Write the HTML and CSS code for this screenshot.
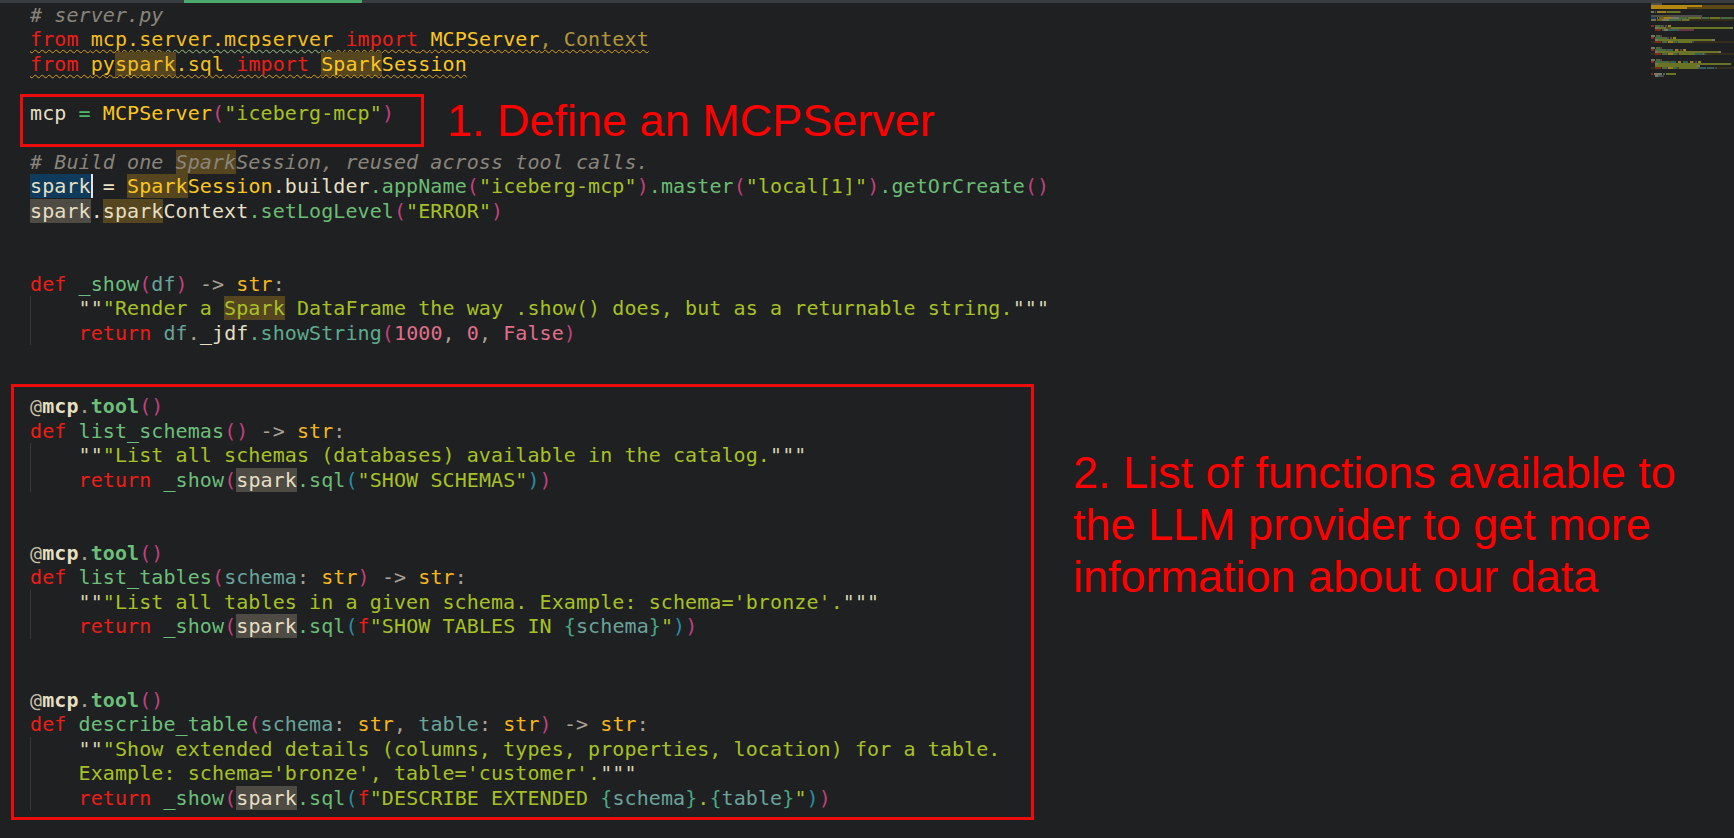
FILE: index.html
```html
<!DOCTYPE html>
<html lang="en">
<head>
<meta charset="utf-8">
<title>server.py</title>
<link rel="stylesheet" href="styles.css">
</head>
<body>
<div class="window">
  <div class="tabbar"><div class="tab-active"></div></div>
  <div class="main">
    <div class="code">
      <div class="ln"><span class="c"># server.py</span></div>
      <div class="ln"><span class="warn"><span class="k">from</span> <span class="m">mcp.se<span class="sq">rver.mcpserver</span></span> <span class="k">import</span> <span class="cl">MCPServer</span><span class="dim">, Context</span></span></div>
      <div class="ln"><span class="warn"><span class="k">from</span> <span class="m">py<span class="hlo">spark</span>.sql</span> <span class="k">import</span> <span class="cl"><span class="hlo">Spark</span>Session</span></span></div>
      <div class="ln"> </div>
      <div class="ln"><span class="v">mcp</span> <span class="op">=</span> <span class="cl">MCPServer</span><span class="p1">(</span><span class="s">"iceberg-mcp"</span><span class="p1">)</span></div>
      <div class="ln"> </div>
      <div class="ln"><span class="c"># Build one <span class="hlo">Spark</span>Session, reused across tool calls.</span></div>
      <div class="ln"><span class="hlb v">spark</span><span class="cursor"></span> <span class="v">=</span> <span class="cl"><span class="hlo">Spark</span>Session</span><span class="v">.builder</span><span class="mt">.appName</span><span class="p1">(</span><span class="s">"iceberg-mcp"</span><span class="p1">)</span><span class="mt">.master</span><span class="p1">(</span><span class="s">"local[1]"</span><span class="p1">)</span><span class="mt">.getOrCreate</span><span class="p1">()</span></div>
      <div class="ln"><span class="hlg v">spark</span><span class="v">.</span><span class="hlo v">spark</span><span class="v">Context</span><span class="mt">.setLogLevel</span><span class="p1">(</span><span class="s">"ERROR"</span><span class="p1">)</span></div>
      <div class="ln"> </div>
      <div class="ln"> </div>
      <div class="ln"><span class="k">def</span> <span class="fn">_show</span><span class="p1">(</span><span class="pa">df</span><span class="p1">)</span> <span class="g">-&gt;</span> <span class="t">str</span><span class="g">:</span></div>
      <div class="guide">
        <div class="ln">    <span class="dq">""</span><span class="s">"Render a <span class="hlo">Spark</span> DataFrame the way .show() does, but as a returnable string.</span><span class="dq">"""</span></div>
        <div class="ln">    <span class="k">return</span> <span class="pa">df</span><span class="g">.</span><span class="v">_jdf</span><span class="mt2">.showString</span><span class="p1">(</span><span class="n">1000</span><span class="g">, </span><span class="n">0</span><span class="g">, </span><span class="n">False</span><span class="p1">)</span></div>
      </div>
      <div class="ln"> </div>
      <div class="ln"> </div>
      <div class="ln"><span class="at">@</span><span class="b v">mcp</span><span class="g">.</span><span class="b fn">tool</span><span class="p1">()</span></div>
      <div class="ln"><span class="k">def</span> <span class="fn">list_schemas</span><span class="p1">()</span> <span class="g">-&gt;</span> <span class="t">str</span><span class="g">:</span></div>
      <div class="guide">
        <div class="ln">    <span class="dq">""</span><span class="s">"List all schemas (databases) available in the catalog.</span><span class="dq">"""</span></div>
        <div class="ln">    <span class="k">return</span> <span class="fn">_show</span><span class="p1">(</span><span class="hlg v">spark</span><span class="mt">.sql</span><span class="p2">(</span><span class="s">"SHOW SCHEMAS"</span><span class="p2">)</span><span class="p1">)</span></div>
      </div>
      <div class="ln"> </div>
      <div class="ln"> </div>
      <div class="ln"><span class="at">@</span><span class="b v">mcp</span><span class="g">.</span><span class="b fn">tool</span><span class="p1">()</span></div>
      <div class="ln"><span class="k">def</span> <span class="fn">list_tables</span><span class="p1">(</span><span class="pa">schema</span><span class="g">: </span><span class="t">str</span><span class="p1">)</span> <span class="g">-&gt;</span> <span class="t">str</span><span class="g">:</span></div>
      <div class="guide">
        <div class="ln">    <span class="dq">""</span><span class="s">"List all tables in a given schema. Example: schema='bronze'.</span><span class="dq">"""</span></div>
        <div class="ln">    <span class="k">return</span> <span class="fn">_show</span><span class="p1">(</span><span class="hlg v">spark</span><span class="mt">.sql</span><span class="p2">(</span><span class="k">f</span><span class="s">"SHOW TABLES IN </span><span class="br">{</span><span class="pa">schema</span><span class="br">}</span><span class="s">"</span><span class="p2">)</span><span class="p1">)</span></div>
      </div>
      <div class="ln"> </div>
      <div class="ln"> </div>
      <div class="ln"><span class="at">@</span><span class="b v">mcp</span><span class="g">.</span><span class="b fn">tool</span><span class="p1">()</span></div>
      <div class="ln"><span class="k">def</span> <span class="fn">describe_table</span><span class="p1">(</span><span class="pa">schema</span><span class="g">: </span><span class="t">str</span><span class="g">, </span><span class="pa">table</span><span class="g">: </span><span class="t">str</span><span class="p1">)</span> <span class="g">-&gt;</span> <span class="t">str</span><span class="g">:</span></div>
      <div class="guide">
        <div class="ln">    <span class="dq">""</span><span class="s">"Show extended details (columns, types, properties, location) for a table.</span></div>
        <div class="ln">    <span class="s">Example: schema='bronze', table='customer'.</span><span class="dq">"""</span></div>
        <div class="ln">    <span class="k">return</span> <span class="fn">_show</span><span class="p1">(</span><span class="hlg v">spark</span><span class="mt">.sql</span><span class="p2">(</span><span class="k">f</span><span class="s">"DESCRIBE EXTENDED </span><span class="br">{</span><span class="pa">schema</span><span class="br">}</span><span class="s">.</span><span class="br">{</span><span class="pa">table</span><span class="br">}</span><span class="s">"</span><span class="p2">)</span><span class="p1">)</span></div>
      </div>
      <div class="ln"> </div>
    </div>
    <div class="minimap">
      <svg width="83" height="80" viewBox="0 0 83 80" shape-rendering="crispEdges" aria-hidden="true">
        <g opacity="0.8">
        <rect x="0" y="0" width="11" height="2" fill="#5f5b55"/>
        <rect x="0" y="2" width="51" height="2" fill="#d9a10e"/>
        <rect x="51" y="2" width="32" height="2" fill="#6b5314"/>
        <rect x="0" y="4" width="36" height="2" fill="#d9a10e"/>
        <rect x="36" y="4" width="47" height="2" fill="#6b5314"/>
        <rect x="0" y="8" width="3" height="2" fill="#8f8a78"/>
        <rect x="4" y="8" width="1" height="2" fill="#3f8a4f"/>
        <rect x="6" y="8" width="9" height="2" fill="#b8951e"/>
        <rect x="15" y="8" width="1" height="2" fill="#7a3a55"/>
        <rect x="16" y="8" width="13" height="2" fill="#7c8a26"/>
        <rect x="29" y="8" width="1" height="2" fill="#7a3a55"/>
        <rect x="0" y="12" width="12" height="2" fill="#5d5a55"/>
        <rect x="12" y="12" width="5" height="2" fill="#6a5a20"/>
        <rect x="17" y="12" width="34" height="2" fill="#5d5a55"/>
        <rect x="0" y="14" width="5" height="2" fill="#1c4664"/>
        <rect x="6" y="14" width="1" height="2" fill="#8f8a78"/>
        <rect x="8" y="14" width="5" height="2" fill="#8a7420"/>
        <rect x="13" y="14" width="7" height="2" fill="#b8951e"/>
        <rect x="20" y="14" width="8" height="2" fill="#8f8a78"/>
        <rect x="28" y="14" width="8" height="2" fill="#4f7e45"/>
        <rect x="36" y="14" width="1" height="2" fill="#7a3a55"/>
        <rect x="37" y="14" width="13" height="2" fill="#7c8a26"/>
        <rect x="50" y="14" width="1" height="2" fill="#7a3a55"/>
        <rect x="51" y="14" width="7" height="2" fill="#4f7e45"/>
        <rect x="58" y="14" width="1" height="2" fill="#7a3a55"/>
        <rect x="59" y="14" width="10" height="2" fill="#7c8a26"/>
        <rect x="69" y="14" width="1" height="2" fill="#7a3a55"/>
        <rect x="70" y="14" width="12" height="2" fill="#4f7e45"/>
        <rect x="82" y="14" width="1" height="2" fill="#7a3a55"/>
        <rect x="0" y="16" width="83" height="2" fill="#38321a"/>
        <rect x="0" y="16" width="5" height="2" fill="#8a8470"/>
        <rect x="6" y="16" width="5" height="2" fill="#8a7420"/>
        <rect x="11" y="16" width="7" height="2" fill="#8f8a78"/>
        <rect x="18" y="16" width="12" height="2" fill="#4f7e45"/>
        <rect x="30" y="16" width="1" height="2" fill="#7a3a55"/>
        <rect x="31" y="16" width="7" height="2" fill="#7c8a26"/>
        <rect x="38" y="16" width="1" height="2" fill="#7a3a55"/>
        <rect x="0" y="22" width="3" height="2" fill="#9a2a1c"/>
        <rect x="4" y="22" width="5" height="2" fill="#4f7e45"/>
        <rect x="9" y="22" width="1" height="2" fill="#7a3a55"/>
        <rect x="10" y="22" width="2" height="2" fill="#3f6e66"/>
        <rect x="12" y="22" width="1" height="2" fill="#7a3a55"/>
        <rect x="14" y="22" width="2" height="2" fill="#5d5a55"/>
        <rect x="17" y="22" width="3" height="2" fill="#b8951e"/>
        <rect x="4" y="24" width="3" height="2" fill="#8f8a78"/>
        <rect x="7" y="24" width="8" height="2" fill="#7c8a26"/>
        <rect x="15" y="24" width="5" height="2" fill="#6a5a20"/>
        <rect x="20" y="24" width="59" height="2" fill="#7c8a26"/>
        <rect x="79" y="24" width="3" height="2" fill="#8f8a78"/>
        <rect x="4" y="26" width="6" height="2" fill="#9a2a1c"/>
        <rect x="11" y="26" width="2" height="2" fill="#3f6e66"/>
        <rect x="13" y="26" width="4" height="2" fill="#8f8a78"/>
        <rect x="17" y="26" width="11" height="2" fill="#3f6e66"/>
        <rect x="28" y="26" width="15" height="2" fill="#7a3a55"/>
        <rect x="0" y="32" width="4" height="2" fill="#8f8a78"/>
        <rect x="5" y="32" width="4" height="2" fill="#4f7e45"/>
        <rect x="9" y="32" width="2" height="2" fill="#7a3a55"/>
        <rect x="0" y="34" width="3" height="2" fill="#9a2a1c"/>
        <rect x="4" y="34" width="12" height="2" fill="#4f7e45"/>
        <rect x="16" y="34" width="2" height="2" fill="#7a3a55"/>
        <rect x="19" y="34" width="2" height="2" fill="#5d5a55"/>
        <rect x="22" y="34" width="3" height="2" fill="#b8951e"/>
        <rect x="4" y="36" width="3" height="2" fill="#8f8a78"/>
        <rect x="7" y="36" width="54" height="2" fill="#7c8a26"/>
        <rect x="61" y="36" width="3" height="2" fill="#8f8a78"/>
        <rect x="0" y="38" width="83" height="2" fill="#38321a"/>
        <rect x="4" y="38" width="6" height="2" fill="#9a2a1c"/>
        <rect x="11" y="38" width="5" height="2" fill="#4f7e45"/>
        <rect x="16" y="38" width="1" height="2" fill="#7a3a55"/>
        <rect x="17" y="38" width="5" height="2" fill="#b8951e"/>
        <rect x="22" y="38" width="4" height="2" fill="#4f7e45"/>
        <rect x="26" y="38" width="1" height="2" fill="#2a5f6a"/>
        <rect x="27" y="38" width="14" height="2" fill="#7c8a26"/>
        <rect x="41" y="38" width="1" height="2" fill="#2a5f6a"/>
        <rect x="42" y="38" width="1" height="2" fill="#7a3a55"/>
        <rect x="0" y="44" width="4" height="2" fill="#8f8a78"/>
        <rect x="5" y="44" width="4" height="2" fill="#4f7e45"/>
        <rect x="9" y="44" width="2" height="2" fill="#7a3a55"/>
        <rect x="0" y="46" width="3" height="2" fill="#9a2a1c"/>
        <rect x="4" y="46" width="11" height="2" fill="#4f7e45"/>
        <rect x="15" y="46" width="1" height="2" fill="#7a3a55"/>
        <rect x="16" y="46" width="6" height="2" fill="#3f6e66"/>
        <rect x="24" y="46" width="3" height="2" fill="#b8951e"/>
        <rect x="27" y="46" width="1" height="2" fill="#7a3a55"/>
        <rect x="29" y="46" width="2" height="2" fill="#5d5a55"/>
        <rect x="32" y="46" width="3" height="2" fill="#b8951e"/>
        <rect x="4" y="48" width="3" height="2" fill="#8f8a78"/>
        <rect x="7" y="48" width="60" height="2" fill="#7c8a26"/>
        <rect x="67" y="48" width="3" height="2" fill="#8f8a78"/>
        <rect x="0" y="50" width="83" height="2" fill="#38321a"/>
        <rect x="4" y="50" width="6" height="2" fill="#9a2a1c"/>
        <rect x="11" y="50" width="5" height="2" fill="#4f7e45"/>
        <rect x="16" y="50" width="1" height="2" fill="#7a3a55"/>
        <rect x="17" y="50" width="5" height="2" fill="#b8951e"/>
        <rect x="22" y="50" width="4" height="2" fill="#4f7e45"/>
        <rect x="26" y="50" width="1" height="2" fill="#2a5f6a"/>
        <rect x="27" y="50" width="1" height="2" fill="#9a2a1c"/>
        <rect x="28" y="50" width="16" height="2" fill="#7c8a26"/>
        <rect x="44" y="50" width="8" height="2" fill="#3f6e66"/>
        <rect x="52" y="50" width="1" height="2" fill="#7c8a26"/>
        <rect x="53" y="50" width="1" height="2" fill="#2a5f6a"/>
        <rect x="54" y="50" width="1" height="2" fill="#7a3a55"/>
        <rect x="0" y="56" width="4" height="2" fill="#8f8a78"/>
        <rect x="5" y="56" width="4" height="2" fill="#4f7e45"/>
        <rect x="9" y="56" width="2" height="2" fill="#7a3a55"/>
        <rect x="0" y="58" width="3" height="2" fill="#9a2a1c"/>
        <rect x="4" y="58" width="14" height="2" fill="#4f7e45"/>
        <rect x="18" y="58" width="1" height="2" fill="#7a3a55"/>
        <rect x="19" y="58" width="6" height="2" fill="#3f6e66"/>
        <rect x="27" y="58" width="3" height="2" fill="#b8951e"/>
        <rect x="32" y="58" width="5" height="2" fill="#3f6e66"/>
        <rect x="39" y="58" width="3" height="2" fill="#b8951e"/>
        <rect x="42" y="58" width="1" height="2" fill="#7a3a55"/>
        <rect x="44" y="58" width="2" height="2" fill="#5d5a55"/>
        <rect x="47" y="58" width="3" height="2" fill="#b8951e"/>
        <rect x="4" y="60" width="3" height="2" fill="#8f8a78"/>
        <rect x="7" y="60" width="73" height="2" fill="#7c8a26"/>
        <rect x="4" y="62" width="42" height="2" fill="#7c8a26"/>
        <rect x="46" y="62" width="3" height="2" fill="#8f8a78"/>
        <rect x="0" y="64" width="83" height="2" fill="#38321a"/>
        <rect x="4" y="64" width="6" height="2" fill="#9a2a1c"/>
        <rect x="11" y="64" width="5" height="2" fill="#4f7e45"/>
        <rect x="16" y="64" width="1" height="2" fill="#7a3a55"/>
        <rect x="17" y="64" width="5" height="2" fill="#b8951e"/>
        <rect x="22" y="64" width="4" height="2" fill="#4f7e45"/>
        <rect x="26" y="64" width="1" height="2" fill="#2a5f6a"/>
        <rect x="27" y="64" width="1" height="2" fill="#9a2a1c"/>
        <rect x="28" y="64" width="19" height="2" fill="#7c8a26"/>
        <rect x="47" y="64" width="8" height="2" fill="#3f6e66"/>
        <rect x="56" y="64" width="7" height="2" fill="#3f6e66"/>
        <rect x="64" y="64" width="1" height="2" fill="#2a5f6a"/>
        <rect x="65" y="64" width="1" height="2" fill="#7a3a55"/>
        <rect x="0" y="70" width="2" height="2" fill="#9a2a1c"/>
        <rect x="3" y="70" width="8" height="2" fill="#8f8a78"/>
        <rect x="12" y="70" width="2" height="2" fill="#3f8a4f"/>
        <rect x="15" y="70" width="10" height="2" fill="#7c8a26"/>
        <rect x="4" y="72" width="3" height="2" fill="#8f8a78"/>
        <rect x="7" y="72" width="4" height="2" fill="#3f6e66"/>
        <rect x="11" y="72" width="2" height="2" fill="#7a3a55"/>
        </g>
      </svg>
    </div>
  </div>
  <div class="box box-define"></div>
  <div class="box box-tools"></div>
  <div class="note note-define">1. Define an MCPServer</div>
  <div class="note note-tools">2. List of functions available to<br>the LLM provider to get more<br>information about our data</div>
</div>
</body>
</html>
```
FILE: styles.css
```css
* {
  box-sizing: border-box;
}

html, body {
  margin: 0;
  padding: 0;
  background: #1e2022;
}

.window {
  position: relative;
  width: 1734px;
  height: 838px;
  overflow: hidden;
  background: #1e2022;
}

.tabbar {
  height: 3px;
  background: #3a3d40;
  display: flex;
}

.tab-active {
  margin-left: 184px;
  width: 178px;
  height: 3px;
  background: #4caa6c;
}

.main {
  display: flex;
  height: 835px;
}

.code {
  flex: 1;
  padding-left: 30px;
  font-family: "DejaVu Sans Mono", monospace;
  font-size: 20px;
  letter-spacing: 0.09px;
  color: #e6dfc2;
}

.ln {
  height: 24.46px;
  line-height: 24.46px;
  white-space: pre;
}

.guide {
  background: linear-gradient(#35383b, #35383b) no-repeat 0 0 / 1px 100%;
}

.minimap {
  width: 83px;
  flex: none;
}

.minimap svg {
  display: block;
}

/* syntax */
.c { color: #8a847a; font-style: italic; }
.k { color: #ee1d16; }
.m { color: #f3bf1e; }
.cl { color: #fbc61f; }
.dim { color: #b4973a; }
.v { color: #e6dfc2; }
.op { color: #4db868; }
.p1 { color: #c2407c; }
.p2 { color: #2b8ea2; }
.s { color: #a7c125; }
.dq { color: #d8d2b4; }
.fn { color: #6cbf7a; }
.mt { color: #6abd73; }
.mt2 { color: #5eab8d; }
.pa { color: #6aa39a; }
.br { color: #48a883; }
.g { color: #a8a194; }
.t { color: #f6b51b; }
.n { color: #e26e8b; }
.at { color: #c9c1a6; }
.b { font-weight: bold; }

.hlo { background: #554620; }
.hlg { background: #4d4b44; }
.hlb { background: #0e3b5b; }

.cursor {
  display: inline-block;
  width: 2px;
  height: 24px;
  margin-right: -2px;
  vertical-align: top;
  background: #e4e4e4;
}

.warn {
  text-decoration: underline wavy #d7a11b;
  text-decoration-thickness: 1px;
  text-underline-offset: 3px;
  text-decoration-skip-ink: none;
}

.sq {
  text-decoration: underline wavy #5f9a86;
  text-decoration-thickness: 1px;
  text-underline-offset: 3px;
  text-decoration-skip-ink: none;
}

/* annotations */
.box {
  position: absolute;
  border: 3px solid #ec0c0c;
}

.box-define {
  left: 20px;
  top: 94px;
  width: 404px;
  height: 53px;
}

.box-tools {
  left: 11px;
  top: 384px;
  width: 1023px;
  height: 436px;
}

.note {
  position: absolute;
  font-family: "Liberation Sans", Arial, sans-serif;
  font-size: 45px;
  line-height: 51.8px;
  color: #ff0000;
  white-space: nowrap;
}

.note-define {
  left: 447px;
  top: 95px;
}

.note-tools {
  left: 1073px;
  top: 447px;
}
```
